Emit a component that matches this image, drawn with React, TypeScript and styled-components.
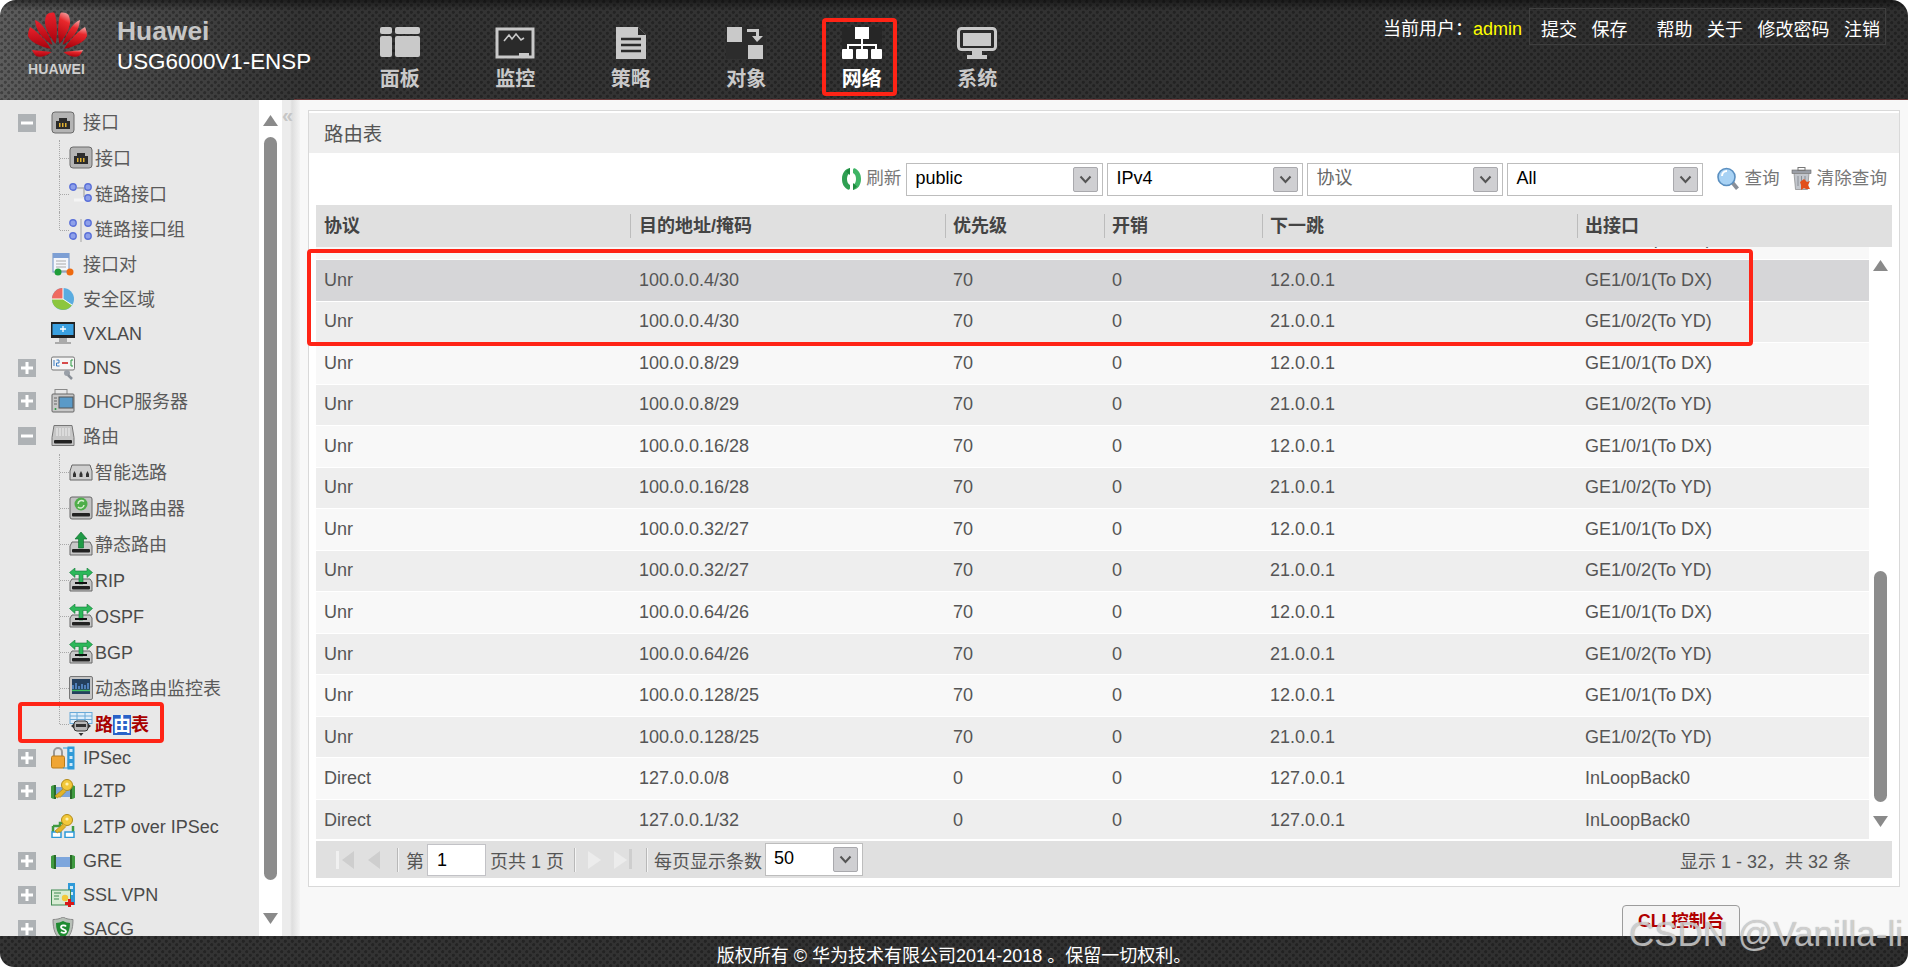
import React from "react";
import styled, { createGlobalStyle } from "styled-components";

const FONT = `"Liberation Sans", "Noto Sans CJK SC", sans-serif`;

const Global = createGlobalStyle`
  html, body { margin: 0; padding: 0; background: #fff; font-family: ${FONT}; }
  * { box-sizing: border-box; }
`;

const dots = `
  radial-gradient(circle at 1.75px 1.75px, rgba(0,0,0,.3) 1.2px, transparent 1.9px),
  radial-gradient(circle at 5.25px 5.25px, rgba(0,0,0,.3) 1.2px, transparent 1.9px)`;

const Page = styled.div`
  position: relative;
  width: 1908px;
  height: 967px;
  overflow: hidden;
  display: flex;
  flex-direction: column;
`;

const Header = styled.header`
  position: relative;
  flex: none;
  height: 100px;
  display: flex;
  border-radius: 16px 16px 0 0;
  background-image: ${dots}, linear-gradient(180deg, rgba(0,0,0,.45) 0, rgba(0,0,0,0) 10px),
    linear-gradient(90deg, #5c5c5c 0, #484848 130px, #343434 300px, #2f2f2f 100%);
  background-size: 7px 7px, 7px 7px, 100% 100%, 100% 100%;
  &::after {
    content: "";
    position: absolute;
    left: 294px;
    right: 0;
    bottom: 0;
    height: 1.5px;
    background: #6d3b3b;
  }
`;

const LogoBlock = styled.div`
  flex: none;
  width: 117px;
  padding: 12px 0 0 28px;
  display: flex;
  flex-direction: column;
`;

const LogoWord = styled.span`
  width: 59px;
  margin-top: 6px;
  font-size: 14px;
  line-height: 12px;
  font-weight: 700;
  letter-spacing: 0.2px;
  color: #cfcfcf;
  white-space: nowrap;
`;

const Brand = styled.div`
  flex: none;
  width: 225px;
  padding-top: 16px;
`;

const BrandName = styled.div`
  font-size: 26.4px;
  line-height: 31px;
  font-weight: 700;
  color: #c6c6c6;
`;

const BrandModel = styled.div`
  margin-top: 2px;
  font-size: 22.4px;
  line-height: 26px;
  color: #fff;
  white-space: nowrap;
`;

const Nav = styled.nav`
  flex: none;
  display: flex;
`;

const NavItem = styled.div<{ $active?: boolean }>`
  width: 115.5px;
  padding-top: 27px;
  display: flex;
  flex-direction: column;
  align-items: center;
  color: ${(p) => (p.$active ? "#fff" : "#c9c9c9")};
  font-size: 20px;
  line-height: 24px;
  font-weight: 700;
  svg { display: block; margin-bottom: 8px; }
`;

const UserArea = styled.div`
  margin-left: auto;
  padding: 8px 22px 0 0;
  display: flex;
  align-items: flex-start;
  color: #fff;
  font-size: 18px;
  line-height: 42px;
  height: 45px;
`;

const CurrentUser = styled.span`
  margin-right: 7px;
  white-space: nowrap;
`;

const UserName = styled.span`
  color: #ffff00;
  font-size: 18px;
`;

const UserLinks = styled.div`
  display: flex;
  height: 37px;
  padding: 0 5px 0 11px;
  gap: 14.5px;
  border: 1px solid #3f3f3f;
`;

const UserLink = styled.span<{ $gap?: boolean }>`
  white-space: nowrap;
  margin-left: ${(p) => (p.$gap ? "14.5px" : "0")};
`;

const Main = styled.main`
  flex: none;
  height: 836px;
  display: flex;
  overflow: hidden;
`;

const Sidebar = styled.aside`
  flex: none;
  width: 259px;
  padding-top: 5px;
  background: #e8e8e8;
  overflow: hidden;
`;

const TreeRow = styled.div<{ $h: number }>`
  height: ${(p) => p.$h}px;
  padding-left: 18px;
  display: flex;
  align-items: center;
  font-size: 18px;
  color: #4a4a4a;
  white-space: nowrap;
`;

const Toggle = styled.span`
  flex: none;
  width: 18px;
  height: 18px;
  background: #aeb2b5;
  display: flex;
  align-items: center;
  justify-content: center;
`;

const ToggleGap = styled.span`
  flex: none;
  width: 18px;
`;

const RowIcon = styled.span`
  flex: none;
  width: 24px;
  height: 24px;
  margin: 0 8px 0 15px;
  svg { display: block; }
`;

const SubRow = styled.div<{ $h: number; $last?: boolean }>`
  position: relative;
  height: ${(p) => p.$h}px;
  padding-left: 69px;
  display: flex;
  align-items: center;
  font-size: 18px;
  color: #4a4a4a;
  white-space: nowrap;
  &::before {
    content: "";
    position: absolute;
    left: 59px;
    top: 0;
    height: ${(p) => (p.$last ? "50%" : "100%")};
    border-left: 1px dotted #a8a8a8;
  }
  &::after {
    content: "";
    position: absolute;
    left: 60px;
    top: 50%;
    width: 9px;
    border-top: 1px dotted #a8a8a8;
  }
`;

const SubIcon = styled.span`
  flex: none;
  width: 24px;
  height: 24px;
  margin-right: 2px;
  svg { display: block; }
`;

const TreeLabel = styled.span<{ $cjk: boolean }>`
  margin: ${(p) => (p.$cjk ? "0 0 3px" : "2px 0 0")};
  color: ${(p) => (p.$cjk ? "#5a5a5a" : "#4a4a4a")};
`;

const TreeCurrent = styled.span`
  color: #a80000;
  font-weight: 700;
`;

const Selected = styled.span`
  background: #2a62c8;
  color: #fff;
`;

const Scroll = styled.div`
  flex: none;
  width: 23px;
  padding: 15px 0 12px;
  background: #fff;
  display: flex;
  flex-direction: column;
  align-items: center;
`;

const SideThumb = styled.div`
  flex: 1;
  width: 13px;
  margin: 11px 0 33px;
  border-radius: 7px;
  background: #8c8c8c;
`;

const Thumb = styled.div`
  flex: 1;
  width: 13px;
  border-radius: 7px;
  background: #8c8c8c;
`;

const Splitter = styled.div`
  flex: none;
  width: 18px;
  padding-top: 4px;
  background: linear-gradient(90deg, #ececec 0, #ececec 8px, #dedede 10px, #f4f4f4 100%);
  color: #c6c6c6;
  font-size: 20px;
  line-height: 22px;
  font-weight: 700;
`;

const Content = styled.section`
  flex: 1;
  min-width: 0;
  background: #f8f8f8;
  padding: 10px 8px 0;
`;

const Panel = styled.div`
  height: 777px;
  padding: 2px 0 0;
  background: #fff;
  border: 1px solid #d9d9d9;
`;

const PanelTitle = styled.h2`
  margin: 0;
  height: 40px;
  padding-left: 15px;
  background: #eeeeee;
  color: #555;
  font-size: 19.4px;
  font-weight: 400;
  line-height: 42px;
`;

const Toolbar = styled.div`
  height: 52px;
  padding-right: 12px;
  display: flex;
  align-items: center;
  justify-content: flex-end;
  color: #777;
  font-size: 17.6px;
  line-height: 24px;
  white-space: nowrap;
`;

const ToolText = styled.span`
  margin-bottom: 2px;
`;

const ToolIcon = styled.span<{ $ml?: number }>`
  display: flex;
  margin: 0 4px 0 ${(p) => p.$ml ?? 0}px;
`;

const Select = styled.div<{ $w: number; $ml?: number }>`
  flex: none;
  width: ${(p) => p.$w}px;
  height: 33px;
  margin-left: ${(p) => p.$ml ?? 0}px;
  padding: 0 4px 0 8px;
  display: flex;
  align-items: center;
  justify-content: space-between;
  background: #fff;
  border: 1px solid #bdbdbd;
  font-size: 18px;
`;

const SelectValue = styled.span<{ $muted?: boolean }>`
  color: ${(p) => (p.$muted ? "#666" : "#000")};
  margin-bottom: ${(p) => (p.$muted ? "3px" : "2px")};
`;

const SelectArrow = styled.span`
  flex: none;
  width: 25px;
  height: 25px;
  display: flex;
  align-items: center;
  justify-content: center;
  background: #cfcfd2;
  border: 1px solid #a9a9ad;
  border-radius: 2px;
`;

const Table = styled.div`
  margin: 0 7px;
  width: 1576px;
`;

const HeadRow = styled.div`
  height: 42px;
  display: grid;
  grid-template-columns: 314px 315px 159px 158px 315px 315px;
  align-items: center;
  background: #e0e0e0;
`;

const HeadCell = styled.div`
  height: 24px;
  padding-left: 7px;
  border-left: 1px solid #bcbcbc;
  color: #444;
  font-size: 18px;
  font-weight: 700;
  line-height: 24px;
  &:first-child { border-left: 0; padding-left: 8px; }
  &:nth-child(2) { padding-left: 8px; }
`;

const BodyWrap = styled.div`
  height: 592px;
  display: flex;
`;

const Viewport = styled.div`
  width: 1553px;
  overflow: hidden;
`;

const Rows = styled.div`
  margin-top: -28.54px;
`;

const Row = styled.div<{ $tone: "sel" | "even" | "odd" }>`
  height: 41.54px;
  display: grid;
  grid-template-columns: 314px 315px 159px 158px 315px 292px;
  align-items: center;
  border-bottom: 1.54px solid #fff;
  background: ${(p) => (p.$tone === "sel" ? "#d6d6d8" : p.$tone === "even" ? "#eeeeee" : "#f8f8f8")};
  color: #555;
  font-size: 18px;
`;

const Cell = styled.div`
  padding-left: 8px;
  white-space: nowrap;
  &:nth-child(2) { padding-left: 9px; }
`;

const TableScroll = styled.div`
  flex: none;
  width: 23px;
  padding: 13px 0 12px;
  background: #fff;
  display: flex;
  flex-direction: column;
  align-items: center;
`;

const TableScrollTrack = styled.div`
  flex: 1;
  padding: 300px 0 14px;
  width: 13px;
  display: flex;
`;

const Pager = styled.div`
  height: 37px;
  margin-top: 2px;
  padding: 0 41px 0 20px;
  display: flex;
  align-items: center;
  background: #e0e0e0;
  color: #555;
  font-size: 18px;
  white-space: nowrap;
`;

const PagerIcon = styled.span<{ $ml: number }>`
  display: flex;
  margin-left: ${(p) => p.$ml}px;
`;

const PagerSep = styled.span<{ $ml: number }>`
  flex: none;
  width: 1px;
  height: 24px;
  margin-left: ${(p) => p.$ml}px;
  background: #b8b8b8;
  box-shadow: 1px 0 0 #f4f4f4;
`;

const PagerText = styled.span<{ $ml: number }>`
  margin-left: ${(p) => p.$ml}px;
`;

const PageInput = styled.span`
  flex: none;
  width: 59px;
  height: 32px;
  margin-left: 3px;
  padding-left: 9px;
  background: #fff;
  border: 1px solid #c2c2c6;
  color: #000;
  line-height: 30px;
`;

const PagerTotal = styled.span`
  margin-left: auto;
`;

const CliBar = styled.div`
  display: flex;
  justify-content: flex-end;
  padding: 18px 160px 0 0;
`;

const CliButton = styled.div`
  width: 118px;
  height: 40px;
  padding-top: 3px;
  text-align: center;
  background: #f4f4f4;
  border: 1px solid #9c9c9c;
  border-radius: 4px;
  color: #b00000;
  font-size: 17.6px;
  font-weight: 700;
  line-height: 24px;
`;

const Footer = styled.footer`
  flex: none;
  height: 31px;
  display: flex;
  align-items: center;
  justify-content: center;
  padding-top: 4px;
  border-radius: 0 0 14px 14px;
  background-image: ${dots}, linear-gradient(90deg, #343434, #2f2f2f);
  background-size: 7px 7px, 7px 7px, 100% 100%;
  color: #fff;
  font-size: 18px;
`;

const Mark = styled.div<{ $x: number; $y: number; $w: number; $h: number }>`
  position: absolute;
  left: ${(p) => p.$x}px;
  top: ${(p) => p.$y}px;
  width: ${(p) => p.$w}px;
  height: ${(p) => p.$h}px;
  border: 4px solid #ff2416;
  border-radius: 4px;
`;

const Watermark = styled.div`
  position: absolute;
  right: 5px;
  top: 914px;
  font-size: 35px;
  line-height: 40px;
  color: rgba(225, 225, 225, 0.72);
  text-shadow: 0 0 1px rgba(90, 90, 90, 0.6);
  white-space: nowrap;
`;

/* ---------- drawings ---------- */

const Tri = ({ up, c = "#8a8a8a" }: { up?: boolean; c?: string }) => (
  <svg width="15" height="11" viewBox="0 0 15 11">
    <path d={up ? "M7.5 0 15 11H0Z" : "M0 0H15L7.5 11Z"} fill={c} />
  </svg>
);

const Chevron = () => (
  <svg width="13" height="9" viewBox="0 0 13 9">
    <path d="M1.5 1.5 6.5 7l5-5.5" fill="none" stroke="#555" strokeWidth="2" />
  </svg>
);

const Logo = () => {
  const petals = (
    <>
      <path d="M27.5 32C20 22 14 12 18.5 3 21 .5 25 0 26.5 1 29.5 10 29.5 24 27.5 32Z" />
      <path d="M24.5 33C15 27 8 20 7 8 14 10 21 22 24.5 33Z" />
      <path d="M23 37C13 35 2 30 0 24 0 20 1 17 2 15 10 20 19 30 23 37Z" />
      <path d="M23.5 40C19 44 12 46 8 44 6 42 5 40 4 38 10 39 18 39 23.5 40Z" />
    </>
  );
  return (
    <svg width="59" height="45" viewBox="0 0 59 45">
      <defs>
        <linearGradient id="lgL" x1="0" y1="0" x2="0" y2="1">
          <stop offset="0" stopColor="#e8222c" />
          <stop offset="1" stopColor="#a8000c" />
        </linearGradient>
        <linearGradient id="lgR" x1="0.3" y1="0" x2="0.5" y2="1">
          <stop offset="0" stopColor="#f4a0a0" />
          <stop offset="0.3" stopColor="#e8282c" />
          <stop offset="1" stopColor="#a8000c" />
        </linearGradient>
      </defs>
      <g fill="url(#lgL)">{petals}</g>
      <g fill="url(#lgR)" transform="translate(59 0) scale(-1 1)">{petals}</g>
    </svg>
  );
};

const NavPanel = () => (
  <svg width="40" height="32" viewBox="0 0 40 32" fill="currentColor">
    <rect x="0" y="0" width="12" height="7" rx="2" />
    <rect x="0" y="9" width="12" height="21" rx="2" />
    <rect x="15" y="0" width="25" height="7" rx="2" />
    <rect x="15" y="9" width="25" height="21" rx="2" />
  </svg>
);
const NavMonitor = () => (
  <svg width="40" height="32" viewBox="0 0 40 32">
    <path d="M2 2H38V30H2Z" fill="#2a2a2a" stroke="currentColor" strokeWidth="3" />
    <path d="M9 14l5-6 3 4 4-5 5 6 3-2" fill="none" stroke="currentColor" strokeWidth="1.6" />
    <path d="M24 31v-5h10v5Z" fill="currentColor" />
  </svg>
);
const NavPolicy = () => (
  <svg width="40" height="32" viewBox="0 0 40 32">
    <path d="M5 0H27L35 8V32H5Z" fill="currentColor" />
    <path d="M27 0 35 8H27Z" fill="#2a2a2a" />
    <path d="M10 12H30M10 18H30M10 24H30" stroke="#2a2a2a" strokeWidth="2.4" />
  </svg>
);
const NavObject = () => (
  <svg width="40" height="32" viewBox="0 0 40 32" fill="currentColor">
    <rect width="40" height="32" fill="#2c2c2c" />
    <rect x="1" y="0" width="15" height="15" />
    <rect x="22" y="18" width="15" height="14" />
    <path d="M21 2H33V9H37L31 15 26 9H30V5H21Z" />
  </svg>
);
const NavNetwork = () => (
  <svg width="40" height="32" viewBox="0 0 40 32" fill="currentColor">
    <rect width="40" height="32" fill="#262626" />
    <rect x="13" y="0" width="14" height="12" />
    <path d="M19 12h2v6h-2zM6 17h28v2H6zM5 17h2v6H5zM19 17h2v6h-2zM33 17h2v6h-2z" />
    <rect x="0" y="22" width="11" height="10" rx="1" />
    <rect x="14" y="22" width="12" height="10" rx="1" />
    <rect x="29" y="22" width="11" height="10" rx="1" />
  </svg>
);
const NavSystem = () => (
  <svg width="40" height="32" viewBox="0 0 40 32">
    <rect x="1.5" y="1.5" width="37" height="21" rx="3" fill="#2a2a2a" stroke="currentColor" strokeWidth="3" />
    <rect x="6" y="6" width="28" height="13" fill="currentColor" />
    <path d="M15 24H25V28H30V32H10V28H15Z" fill="currentColor" />
  </svg>
);

const Port = () => (
  <svg width="24" height="24" viewBox="0 0 24 24">
    <rect x="1" y="1" width="22" height="21" rx="3" fill="#b4b4b4" stroke="#6a6a6a" />
    <path d="M5 10h3V7h8v3h3v8H5Z" fill="#2c2c2c" />
    <path d="M8 12h1.5v4H8zM11 12h1.5v4H11zM14 12h1.5v4H14z" fill="#e0b030" />
  </svg>
);
const Bub = ({ x, y }: { x: number; y: number }) => (
  <circle cx={x} cy={y} r="3.2" fill="#8ea0ea" stroke="#5a70d8" strokeWidth="1.4" />
);
const LinkIf = () => (
  <svg width="24" height="24" viewBox="0 0 24 24">
    <path d="M8 6h7v9" fill="none" stroke="#b0b0b0" strokeWidth="1.4" />
    <path d="M5 18h13" stroke="#f4f4f4" strokeWidth="3" />
    <Bub x={4} y={5} /><Bub x={19} y={5} /><Bub x={19} y={16} />
  </svg>
);
const LinkGrp = () => (
  <svg width="24" height="24" viewBox="0 0 24 24">
    <path d="M12 1v23" stroke="#b8b8b8" strokeWidth="1.4" />
    <Bub x={4} y={5} /><Bub x={19} y={5} /><Bub x={4} y={18} /><Bub x={19} y={18} />
  </svg>
);
const Pair = () => (
  <svg width="24" height="24" viewBox="0 0 24 24">
    <rect x="2" y="0" width="16" height="19" fill="#f4f6fb" stroke="#6d8fc4" />
    <rect x="2" y="0" width="16" height="5" fill="#7d9fd4" />
    <path d="M5 8h10M5 11h10M5 14h10" stroke="#aaa" />
    <path d="M7 18h12" stroke="#888" />
    <circle cx="7" cy="19" r="3.5" fill="#1f9d3a" />
    <circle cx="19" cy="19" r="3.5" fill="#ee6a10" />
  </svg>
);
const Zone = () => (
  <svg width="24" height="24" viewBox="0 0 24 24">
    <circle cx="12" cy="12" r="11" fill="#5aace0" />
    <path d="M12 12V1A11 11 0 0 0 1 12Z" fill="#ef6a60" />
    <path d="M12 12H1A11 11 0 0 0 21 18Z" fill="#8cc63e" />
    <path d="M12 12l9 6" stroke="#fff" strokeWidth="1" />
    <path d="M12 1v11H1" stroke="#fff" strokeWidth="1" fill="none" />
  </svg>
);
const Vxlan = () => (
  <svg width="24" height="24" viewBox="0 0 24 24">
    <rect x="0" y="0" width="24" height="16" fill="#222" />
    <rect x="1.5" y="2" width="21" height="11" fill="#3aa0e0" />
    <path d="M12 4v6M9 7h6" stroke="#fff" strokeWidth="1.3" />
    <path d="M8 16h8v4H8zM4 20h16v2H4z" fill="#aaa" />
  </svg>
);
const Dns = () => (
  <svg width="24" height="24" viewBox="0 0 24 24">
    <rect x="0.5" y="1" width="23" height="13" rx="1.5" fill="#f4f4f4" stroke="#777" />
    <path d="M3 4v6M5.5 4h2.5v3H5.5v3h3" stroke="#3a7ac0" fill="none" />
    <path d="M11 7h6" stroke="#d02020" strokeWidth="1.6" />
    <path d="M22 4h-2v6h2" stroke="#2a9a40" fill="none" />
    <circle cx="16" cy="17" r="3" fill="#9aa0a8" />
    <path d="M17 19l4 4" stroke="#8a9098" strokeWidth="2.5" />
  </svg>
);
const Dhcp = () => (
  <svg width="24" height="24" viewBox="0 0 24 24">
    <rect x="4" y="0.5" width="12" height="7" fill="none" stroke="#8a8a8a" />
    <rect x="1" y="5" width="22" height="18" rx="1" fill="#c8c8c8" stroke="#666" />
    <rect x="8" y="8" width="14" height="11" fill="#5a9ac8" stroke="#555" />
    <path d="M3 9h3M3 12h3M3 15h3" stroke="#666" />
    <circle cx="4.5" cy="20" r="1" fill="#2a9a40" />
  </svg>
);
const Router = () => (
  <svg width="24" height="24" viewBox="0 0 24 24">
    <path d="M3 1.5h18l2 12v8H1v-8Z" fill="#c6c6c6" stroke="#777" />
    <path d="M6 4v8M9 4v8M12 4v8M15 4v8M18 4v8" stroke="#e4e4e4" strokeWidth="1.4" />
    <rect x="3" y="16" width="18" height="3.5" rx="1" fill="#222" />
  </svg>
);
const Smart = () => (
  <svg width="24" height="24" viewBox="0 0 24 24">
    <path d="M3 5h18l2 6v9H1v-9Z" fill="#cfcfcf" stroke="#666" />
    <path d="M4 14l1.5-3L7 14v3H4zM10.5 14l1.5-3 1.5 3v3h-3zM17 14l1.5-3L20 14v3h-3z" fill="#333" />
  </svg>
);
const VRouter = () => (
  <svg width="24" height="24" viewBox="0 0 24 24">
    <rect x="1" y="1" width="22" height="22" rx="2" fill="#c2c2c2" stroke="#666" />
    <circle cx="12" cy="8" r="6.5" fill="#4fae4a" />
    <path d="M9 8a3.5 3.5 0 0 1 6-2.4M15 9a3.5 3.5 0 0 1-6 2" stroke="#d8f0d0" strokeWidth="1.5" fill="none" />
    <rect x="3" y="17" width="18" height="3.5" rx="1" fill="#222" />
  </svg>
);
const StaticR = () => (
  <svg width="24" height="24" viewBox="0 0 24 24">
    <path d="M3 10h18l2 4v9H1v-9Z" fill="#c8c8c8" stroke="#666" />
    <rect x="3" y="17" width="18" height="3.5" rx="1" fill="#222" />
    <path d="M12 0l6 7h-3.5v9h-5V7H6Z" fill="#1f9a46" stroke="#0e6a2c" strokeWidth=".6" />
  </svg>
);
const Rip = () => (
  <svg width="24" height="24" viewBox="0 0 24 24">
    <path d="M3 11h18l2 3v9H1v-9Z" fill="#c8c8c8" stroke="#666" />
    <rect x="3" y="18" width="18" height="3.5" rx="1" fill="#222" />
    <path d="M10 16V6.500H6V9.500L0.500 4.500 6 0V3h12V0l5.500 4.500L18 9.500V6.500h-4V16Z" fill="#2cb85a" stroke="#137a36" strokeWidth=".6" />
    <path d="M6 15h12" stroke="#111" strokeWidth="2" />
  </svg>
);
const Dyn = () => (
  <svg width="24" height="24" viewBox="0 0 24 24">
    <rect x="0.5" y="0.5" width="23" height="23" rx="1.5" fill="#c4c4c4" stroke="#777" />
    <rect x="3" y="3" width="18" height="15" fill="#24405e" />
    <path d="M4 13V9M7 13V7M10 13V10M13 13V8M16 13V9M19 13V7" stroke="#5a90d0" strokeWidth="1.6" />
    <path d="M3 14.5h18" stroke="#3ec060" strokeWidth="1.4" />
  </svg>
);
const RouteTbl = () => (
  <svg width="24" height="24" viewBox="0 0 24 24">
    <rect x="1" y="0.5" width="22" height="11" fill="#dfeefa" stroke="#6aaad8" />
    <path d="M1 4h22M1 7.5h22M8 .5v11M16 .5v11" stroke="#6aaad8" />
    <rect x="5" y="9" width="14" height="10" rx="3" fill="#b8b8b8" stroke="#333" />
    <rect x="7" y="12" width="10" height="3" fill="#333" />
    <path d="M2 14l3-2.5v5ZM22 14l-3-2.5v5ZM9.5 21h5L12 24Z" fill="#333" />
  </svg>
);
const Ipsec = () => (
  <svg width="24" height="24" viewBox="0 0 24 24">
    <path d="M3 10V6a4 4 0 0 1 8 0v4" fill="none" stroke="#999" strokeWidth="2" />
    <rect x="0.5" y="10" width="13" height="12" rx="1.5" fill="#efa534" stroke="#b87a1a" />
    <path d="M12 2h5v20h-5" fill="none" stroke="#2f9ad8" strokeWidth="1" />
    <rect x="16.5" y="0.5" width="7" height="23" fill="#2f9ad8" />
    <path d="M18.5 3h3v3h-3zM18.5 10h3v3h-3zM18.5 17h3v3h-3z" fill="#cfeaf8" />
  </svg>
);
const Tube = () => (
  <>
    <rect x="4" y="8" width="16" height="10" fill="#7da6dc" />
    <path d="M4 6a3 3 0 0 0 0 14ZM20 6a3 3 0 0 1 0 14Z" fill="#3f9a40" />
    <path d="M4 6V20M20 6V20" stroke="#2a6a2a" strokeWidth="2" />
  </>
);
const Key = () => (
  <>
    <circle cx="16" cy="6" r="5.5" fill="#f2c83a" stroke="#b28a16" />
    <circle cx="16" cy="5" r="1.6" fill="#fff2b0" />
    <path d="M12 10 4 17l2.5 2 1.5-1.5 1 1 6-6" fill="#e2b428" stroke="#b28a16" strokeWidth=".8" />
  </>
);
const L2tp = () => (
  <svg width="24" height="24" viewBox="0 0 24 24"><Tube /><Key /></svg>
);
const L2tpI = () => (
  <svg width="24" height="24" viewBox="0 0 24 24">
    <path d="M2 12h7v-3h6M2 12v6M22 12v6" stroke="#3f9a40" strokeWidth="2.5" fill="none" />
    <rect x="1" y="18" width="9" height="5.5" fill="#fff" stroke="#2f9ad8" strokeWidth="1.5" />
    <rect x="14" y="18" width="9" height="5.5" fill="#fff" stroke="#2f9ad8" strokeWidth="1.5" />
    <Key />
  </svg>
);
const Gre = () => (
  <svg width="24" height="24" viewBox="0 0 24 24"><Tube /></svg>
);
const Ssl = () => (
  <svg width="24" height="24" viewBox="0 0 24 24">
    <rect x="17" y="0" width="7" height="22" fill="#2f9ad8" />
    <path d="M19 3h3v3h-3zM19 9h3v3h-3z" fill="#cfeaf8" />
    <rect x="0.5" y="7" width="19" height="15" fill="#d8ecd4" stroke="#3f8a50" />
    <path d="M3 10h7M3 13h5M3 16h5" stroke="#3f8a50" />
    <circle cx="14" cy="15" r="3.2" fill="#f2c83a" />
    <path d="M17 16h3v3h3v3h-3v2h-3v-2h-3v-3h3Z" fill="#d81818" />
  </svg>
);
const Sacg = () => (
  <svg width="24" height="24" viewBox="0 0 24 24">
    <path d="M12 0c3 2 7 2.5 10 2.5C22 12 20 20 12 24 4 20 2 12 2 2.5 5 2.5 9 2 12 0Z" fill="#b8c0b8" stroke="#8a8a8a" />
    <path d="M12 4c2 1 5 2 7 2 0 7-2 12-7 15C7 18 5 13 5 6c2 0 5-1 7-2Z" fill="#1e8a30" />
    <path d="M15 9.5c-1-1.5-5-1.500-5 .8 0 2.500 5 1.500 5 4 0 2-4 2-5 .5" fill="none" stroke="#fff" strokeWidth="1.8" />
  </svg>
);

const Refresh = () => (
  <svg width="21" height="24" viewBox="0 0 21 24">
    <path d="M9 1C4 2 1 6 1 12c0 5 2 8 5 10 1 1 3 1 3-1v-3c-2-1-3-3-3-6s1-5 3-6Z" fill="#2f9f52" />
    <path d="M12 23c5-1 8-5 8-11 0-5-2-8-5-10-1-1-3-1-3 1v3c2 1 3 3 3 6s-1 5-3 6Z" fill="#3fb465" />
    <path d="M9 1v7l-4-3.500ZM12 23v-7l4 3.500Z" fill="#1f8a40" />
  </svg>
);
const Search = () => (
  <svg width="23" height="24" viewBox="0 0 23 24">
    <path d="M14 17l5 6 3-2.5-5-6Z" fill="#8a8f98" />
    <circle cx="9.5" cy="10" r="8.5" fill="#a8d2f4" stroke="#5a8fc0" strokeWidth="1.6" />
    <path d="M5 9a5 5 0 0 1 5-5" stroke="#fff" strokeWidth="2" fill="none" />
  </svg>
);
const Trash = () => (
  <svg width="22" height="24" viewBox="0 0 22 24">
    <rect x="1" y="3" width="19" height="3.5" fill="#9a9ea6" stroke="#666" strokeWidth=".6" />
    <rect x="7" y="0.5" width="7" height="3" fill="none" stroke="#777" />
    <path d="M3 6.5h15l-1.5 16h-12Z" fill="#c2c6cc" stroke="#777" strokeWidth=".6" />
    <path d="M7 9v10M10.5 9v10M14 9v10" stroke="#8a8e96" />
    <path d="M9 15l4-3 3 3 3-1-2 4 2 4h-4l-2-1-3 2 0-5Z" fill="#e2501c" />
  </svg>
);

const PFirst = () => (
  <svg width="18" height="22" viewBox="0 0 18 22">
    <rect x="0" y="2" width="3" height="18" fill="#f0f0f0" />
    <path d="M18 2V20L6 11Z" fill="#cecece" />
  </svg>
);
const PPrev = () => (
  <svg width="12" height="22" viewBox="0 0 12 22"><path d="M12 2V20L0 11Z" fill="#cecece" /></svg>
);
const PNext = () => (
  <svg width="13" height="22" viewBox="0 0 13 22"><path d="M0 2V20L13 11Z" fill="#ececec" /></svg>
);
const PLast = () => (
  <svg width="18" height="24" viewBox="0 0 18 24">
    <path d="M0 3V21L13 12Z" fill="#ececec" />
    <rect x="15" y="1" width="3" height="20" fill="#cecece" />
  </svg>
);

/* ---------- data ---------- */

type Tree = {
  label: string;
  h: number;
  icon: React.FC;
  toggle?: "minus" | "plus";
  sub?: boolean;
  last?: boolean;
  current?: boolean;
};

const tree: Tree[] = [
  { label: "接口", h: 35, icon: Port, toggle: "minus" },
  { label: "接口", h: 36, icon: Port, sub: true },
  { label: "链路接口", h: 36, icon: LinkIf, sub: true },
  { label: "链路接口组", h: 35, icon: LinkGrp, sub: true, last: true },
  { label: "接口对", h: 35, icon: Pair },
  { label: "安全区域", h: 34, icon: Zone },
  { label: "VXLAN", h: 35, icon: Vxlan },
  { label: "DNS", h: 33, icon: Dns, toggle: "plus" },
  { label: "DHCP服务器", h: 34, icon: Dhcp, toggle: "plus" },
  { label: "路由", h: 36, icon: Router, toggle: "minus" },
  { label: "智能选路", h: 36, icon: Smart, sub: true },
  { label: "虚拟路由器", h: 36, icon: VRouter, sub: true },
  { label: "静态路由", h: 36, icon: StaticR, sub: true },
  { label: "RIP", h: 36, icon: Rip, sub: true },
  { label: "OSPF", h: 36, icon: Rip, sub: true },
  { label: "BGP", h: 36, icon: Rip, sub: true },
  { label: "动态路由监控表", h: 36, icon: Dyn, sub: true },
  { label: "路由表", h: 36, icon: RouteTbl, sub: true, last: true, current: true },
  { label: "IPSec", h: 31, icon: Ipsec, toggle: "plus" },
  { label: "L2TP", h: 35, icon: L2tp, toggle: "plus" },
  { label: "L2TP over IPSec", h: 36, icon: L2tpI },
  { label: "GRE", h: 33, icon: Gre, toggle: "plus" },
  { label: "SSL VPN", h: 35, icon: Ssl, toggle: "plus" },
  { label: "SACG", h: 33, icon: Sacg, toggle: "plus" },
];

const nets = [
  "100.0.0.4/30", "100.0.0.4/30", "100.0.0.8/29", "100.0.0.8/29",
  "100.0.0.16/28", "100.0.0.16/28", "100.0.0.32/27", "100.0.0.32/27",
  "100.0.0.64/26", "100.0.0.64/26", "100.0.0.128/25", "100.0.0.128/25",
];

const routes = [
  ["", "", "", "", "", "GE1/0/2(To YD)"],
  ...nets.map((n, i) => [
    "Unr", n, "70", "0",
    i % 2 ? "21.0.0.1" : "12.0.0.1",
    i % 2 ? "GE1/0/2(To YD)" : "GE1/0/1(To DX)",
  ]),
  ["Direct", "127.0.0.0/8", "0", "0", "127.0.0.1", "InLoopBack0"],
  ["Direct", "127.0.0.1/32", "0", "0", "127.0.0.1", "InLoopBack0"],
];

const navs: [string, React.FC, boolean?][] = [
  ["面板", NavPanel],
  ["监控", NavMonitor],
  ["策略", NavPolicy],
  ["对象", NavObject],
  ["网络", NavNetwork, true],
  ["系统", NavSystem],
];

const heads = ["协议", "目的地址/掩码", "优先级", "开销", "下一跳", "出接口"];

const toneOf = (i: number): "sel" | "even" | "odd" =>
  i === 1 ? "sel" : i === 0 ? "odd" : i % 2 === 0 ? "even" : "odd";

const ToggleIcon = ({ kind }: { kind: "minus" | "plus" }) => (
  <svg width="12" height="12" viewBox="0 0 12 12">
    <path d={kind === "plus" ? "M0 6H12M6 0V12" : "M0 6H12"} stroke="#fff" strokeWidth="3" />
  </svg>
);

const Label = ({ item }: { item: Tree }) => (
  <TreeLabel $cjk={/[\u4e00-\u9fff]/.test(item.label)}>
    {item.current ? (
      <TreeCurrent>
        路<Selected>由</Selected>表
      </TreeCurrent>
    ) : (
      item.label
    )}
  </TreeLabel>
);

export default function App() {
  return (
    <Page>
      <Global />
      <Header>
        <LogoBlock>
          <Logo />
          <LogoWord>HUAWEI</LogoWord>
        </LogoBlock>
        <Brand>
          <BrandName>Huawei</BrandName>
          <BrandModel>USG6000V1-ENSP</BrandModel>
        </Brand>
        <Nav>
          {navs.map(([label, Icon, active]) => (
            <NavItem key={label} $active={active}>
              <Icon />
              {label}
            </NavItem>
          ))}
        </Nav>
        <UserArea>
          <CurrentUser>
            当前用户：<UserName>admin</UserName>
          </CurrentUser>
          <UserLinks>
            <UserLink>提交</UserLink>
            <UserLink>保存</UserLink>
            <UserLink $gap>帮助</UserLink>
            <UserLink>关于</UserLink>
            <UserLink>修改密码</UserLink>
            <UserLink>注销</UserLink>
          </UserLinks>
        </UserArea>
      </Header>
      <Main>
        <Sidebar>
          {tree.map((t, i) => {
            const Icon = t.icon;
            return t.sub ? (
              <SubRow key={i} $h={t.h} $last={t.last}>
                <SubIcon><Icon /></SubIcon>
                <Label item={t} />
              </SubRow>
            ) : (
              <TreeRow key={i} $h={t.h}>
                {t.toggle ? (
                  <Toggle><ToggleIcon kind={t.toggle} /></Toggle>
                ) : (
                  <ToggleGap />
                )}
                <RowIcon><Icon /></RowIcon>
                <Label item={t} />
              </TreeRow>
            );
          })}
        </Sidebar>
        <Scroll>
          <Tri up />
          <SideThumb />
          <Tri />
        </Scroll>
        <Splitter>«</Splitter>
        <Content>
          <Panel>
            <PanelTitle>路由表</PanelTitle>
            <Toolbar>
              <ToolIcon><Refresh /></ToolIcon>
              <ToolText>刷新</ToolText>
              <Select $w={197} $ml={5}>
                <SelectValue>public</SelectValue>
                <SelectArrow><Chevron /></SelectArrow>
              </Select>
              <Select $w={196} $ml={4}>
                <SelectValue>IPv4</SelectValue>
                <SelectArrow><Chevron /></SelectArrow>
              </Select>
              <Select $w={196} $ml={4}>
                <SelectValue $muted>协议</SelectValue>
                <SelectArrow><Chevron /></SelectArrow>
              </Select>
              <Select $w={196} $ml={4}>
                <SelectValue>All</SelectValue>
                <SelectArrow><Chevron /></SelectArrow>
              </Select>
              <ToolIcon $ml={14}><Search /></ToolIcon>
              <ToolText>查询</ToolText>
              <ToolIcon $ml={11}><Trash /></ToolIcon>
              <ToolText>清除查询</ToolText>
            </Toolbar>
            <Table>
              <HeadRow>
                {heads.map((h) => (
                  <HeadCell key={h}>{h}</HeadCell>
                ))}
              </HeadRow>
              <BodyWrap>
                <Viewport>
                  <Rows>
                    {routes.map((r, i) => (
                      <Row key={i} $tone={toneOf(i)}>
                        {r.map((c, j) => (
                          <Cell key={j}>{c}</Cell>
                        ))}
                      </Row>
                    ))}
                  </Rows>
                </Viewport>
                <TableScroll>
                  <Tri up />
                  <TableScrollTrack>
                    <Thumb />
                  </TableScrollTrack>
                  <Tri />
                </TableScroll>
              </BodyWrap>
              <Pager>
                <PagerIcon $ml={0}><PFirst /></PagerIcon>
                <PagerIcon $ml={14}><PPrev /></PagerIcon>
                <PagerSep $ml={17} />
                <PagerText $ml={8}>第</PagerText>
                <PageInput>1</PageInput>
                <PagerText $ml={4}>页共 1 页</PagerText>
                <PagerSep $ml={10} />
                <PagerIcon $ml={13}><PNext /></PagerIcon>
                <PagerIcon $ml={13}><PLast /></PagerIcon>
                <PagerSep $ml={14} />
                <PagerText $ml={7}>每页显示条数</PagerText>
                <Select $w={98} $ml={3}>
                  <SelectValue>50</SelectValue>
                  <SelectArrow><Chevron /></SelectArrow>
                </Select>
                <PagerTotal>显示 1 - 32，共 32 条</PagerTotal>
              </Pager>
            </Table>
          </Panel>
          <CliBar>
            <CliButton>CLI 控制台</CliButton>
          </CliBar>
        </Content>
      </Main>
      <Footer>版权所有 © 华为技术有限公司2014-2018 。保留一切权利。</Footer>
      <Mark $x={822} $y={18} $w={75} $h={78} />
      <Mark $x={18} $y={702} $w={146} $h={41} />
      <Mark $x={307} $y={249} $w={1446} $h={97} />
      <Watermark>CSDN @Vanilla-li</Watermark>
    </Page>
  );
}
